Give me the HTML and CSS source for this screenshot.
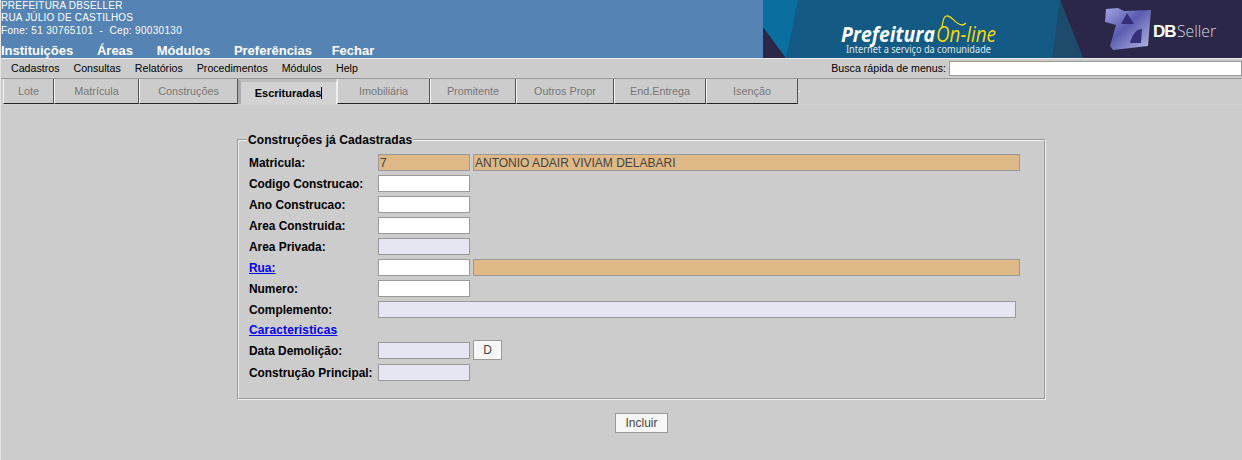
FILE: index.html
```html
<!DOCTYPE html>
<html lang="pt-BR">
<head>
  <meta charset="UTF-8">
  <title>Prefeitura On-line</title>
  <link rel="stylesheet" href="styles.css">
</head>
<body>

  <header class="topo">
    <div class="topo-esq">
      <div class="inst">PREFEITURA DBSELLER</div>
      <div class="inst">RUA JÚLIO DE CASTILHOS</div>
      <div class="inst fone">Fone: 51 30765101 &nbsp;-&nbsp; Cep: 90030130</div>
      <nav class="menu-topo">
        <a>Instituições</a>
        <a>Áreas</a>
        <a>Módulos</a>
        <a>Preferências</a>
        <a class="fechar">Fechar</a>
      </nav>
    </div>
    <svg class="banner" width="479" height="58" viewBox="0 0 479 58">
      <defs>
        <linearGradient id="cubo" x1="0" y1="0" x2="1" y2="1">
          <stop offset="0" stop-color="#a3a5e4"/>
          <stop offset="0.45" stop-color="#5b5cb0"/>
          <stop offset="1" stop-color="#b9bce4"/>
        </linearGradient>
      </defs>
      <rect width="479" height="58" fill="#2a2748"/>
      <polygon points="0,0 0,27 23,58 320,58 297,0" fill="#135a85"/>
      <polygon points="0,0 0,27 23,58 35,0" fill="#0a6f9f"/>
      <polygon points="297,0 320,58 289,58" fill="#1e4a6c"/>
      <text class="logo-pref" x="78" y="42" textLength="94" lengthAdjust="spacingAndGlyphs">Prefeitura</text>
      <text class="logo-online" x="173" y="42" textLength="60" lengthAdjust="spacingAndGlyphs">On-line</text>
      <path d="M179 27 C180 20 181 15 185 16 C190 17 192 24 199 25 C201 25 202 24 203 23" fill="none" stroke="#f2d90c" stroke-width="1.3"/>
      <text class="logo-sub" x="83" y="53" textLength="145" lengthAdjust="spacingAndGlyphs">Internet a serviço da comunidade</text>
      <path d="M343 9 L355 8 L361 11 L388 10 L385 46 L350 50 L347 46 L353 25 L342 22 Z" fill="url(#cubo)"/>
      <path d="M358 24 L364 13 L371 24 Z" fill="#34307a"/>
      <path d="M367 43 C369 35 373 29 379 29 L378 43 Z" fill="#34307a"/>
      <text class="logo-db" x="390" y="37">DB</text>
      <text class="logo-seller" x="414" y="37" textLength="39" lengthAdjust="spacingAndGlyphs">Seller</text>
    </svg>
  </header>

  <div class="barra-menu">
    <ul class="menu-sis">
      <li>Cadastros</li>
      <li>Consultas</li>
      <li>Relatórios</li>
      <li>Procedimentos</li>
      <li>Módulos</li>
      <li>Help</li>
    </ul>
    <div class="busca">
      <label for="busca">Busca rápida de menus:</label>
      <input type="text" id="busca">
    </div>
  </div>

  <div class="abas">
    <a class="aba w-lote">Lote</a>
    <a class="aba w-mat">Matrícula</a>
    <a class="aba w-cons">Construções</a>
    <a class="aba aba-ativa w-esc"><span class="cursor">Escrituradas</span></a>
    <a class="aba w-imo">Imobiliária</a>
    <a class="aba w-pro">Promitente</a>
    <a class="aba w-out">Outros Propr</a>
    <a class="aba w-end">End.Entrega</a>
    <a class="aba w-ise">Isenção</a>
  </div>

  <main class="conteudo">
    <fieldset class="grupo">
      <legend>Construções já Cadastradas</legend>

      <div class="linha">
        <label>Matricula:</label>
        <input class="campo leitura" type="text" value="7">
        <input class="campo leitura largo" type="text" value="ANTONIO ADAIR VIVIAM DELABARI">
      </div>
      <div class="linha">
        <label>Codigo Construcao:</label>
        <input class="campo" type="text">
      </div>
      <div class="linha">
        <label>Ano Construcao:</label>
        <input class="campo" type="text">
      </div>
      <div class="linha">
        <label>Area Construida:</label>
        <input class="campo" type="text">
      </div>
      <div class="linha">
        <label>Area Privada:</label>
        <input class="campo lilas" type="text">
      </div>
      <div class="linha">
        <label><a class="link" href="#">Rua:</a></label>
        <input class="campo" type="text">
        <input class="campo leitura largo" type="text">
      </div>
      <div class="linha">
        <label>Numero:</label>
        <input class="campo" type="text">
      </div>
      <div class="linha">
        <label>Complemento:</label>
        <input class="campo lilas compl" type="text">
      </div>
      <div class="linha linha-link">
        <a class="link link-carac" href="#">Caracteristicas</a>
      </div>
      <div class="linha">
        <label>Data Demolição:</label>
        <input class="campo lilas" type="text">
        <button class="btn btn-d" type="button">D</button>
      </div>
      <div class="linha linha-ult">
        <label>Construção Principal:</label>
        <input class="campo lilas" type="text">
      </div>
    </fieldset>

    <div class="acoes">
      <button class="btn btn-incluir" type="button">Incluir</button>
    </div>
  </main>

</body>
</html>
```

FILE: styles.css
```css
* {
  box-sizing: border-box;
}

html {
  background: #cccccc;
}

body {
  margin: 0;
  height: 460px;
  overflow: hidden;
  background: #cccccc;
  border-left: 1px solid #e4e4e4;
  font-family: "Liberation Sans", Arial, sans-serif;
  font-size: 11px;
  color: #000;
}

.topo {
  display: flex;
  justify-content: space-between;
  height: 58px;
  margin-left: -1px;
  background: #5583b3;
}

.topo-esq {
  padding-left: 1px;
  color: #fff;
}

.inst {
  height: 12px;
  font-size: 10px;
  line-height: 11px;
  letter-spacing: 0.2px;
  white-space: nowrap;
}

.fone {
  margin-top: 1px;
  height: 15px;
  line-height: 11px;
  letter-spacing: 0.33px;
}

.menu-topo {
  display: flex;
  gap: 23.7px;
  margin-top: 4px;
  font-size: 13px;
  font-weight: bold;
  line-height: 14px;
  white-space: nowrap;
}

.fechar {
  margin-left: -4px;
}

.banner {
  display: block;
  flex: none;
}

.logo-pref {
  font-family: "Open Sans", sans-serif;
  font-size: 21px;
  font-weight: bold;
  font-style: italic;
  fill: #fff;
}

.logo-online {
  font-family: "Open Sans", sans-serif;
  font-size: 22px;
  font-style: italic;
  fill: #f2d90c;
}

.logo-sub {
  font-family: "Noto Sans", sans-serif;
  font-size: 10px;
  fill: #dfe8ee;
}

.logo-db {
  font-family: "Liberation Sans", sans-serif;
  font-size: 17px;
  font-weight: bold;
  letter-spacing: -1px;
  fill: #fff;
}

.logo-seller {
  font-family: "Open Sans", sans-serif;
  font-size: 17px;
  font-weight: 300;
  fill: #d8d8e0;
}

.barra-menu {
  display: flex;
  justify-content: space-between;
  height: 21px;
  border-top: 1px solid #ececec;
  border-bottom: 1px solid #999;
  font-size: 10.65px;
}

.menu-sis {
  display: flex;
  gap: 14px;
  margin: 0;
  padding: 3px 0 0 10px;
  list-style: none;
  line-height: 13px;
  white-space: nowrap;
}

.busca {
  display: flex;
  align-items: center;
  gap: 3px;
  height: 18px;
}

.busca label {
  margin-top: -1px;
}

.busca input {
  width: 293px;
  height: 15px;
  padding: 0;
  background: #fff;
  border: 1px solid #999;
}

.abas {
  display: flex;
  height: 26px;
  padding-left: 2px;
  border-bottom: 1px solid #d2d2d2;
  font-size: 10.8px;
}

.abas::after {
  content: "";
  align-self: center;
  width: 1px;
  height: 1px;
  margin-left: 1px;
  background: #fff;
}

.aba {
  display: flex;
  align-items: center;
  justify-content: center;
  height: 25px;
  color: #777;
  border-left: 1px solid #f2f2f2;
  border-right: 1px solid #555;
  border-bottom: 1px solid #222;
}

.w-lote { width: 51px; }
.w-mat { width: 85px; }
.w-cons { width: 99px; }
.w-esc { width: 99px; }
.w-imo { width: 93px; }
.w-pro { width: 86px; }
.w-out { width: 98px; }
.w-end { width: 92px; }
.w-ise { width: 92px; }

.aba-ativa {
  color: #000;
  font-size: 11px;
  font-weight: bold;
  background: #d2d2d2;
  border-left: 3px solid #aaa;
  border-top: 3px solid #bdbdbd;
  border-right: 1px solid #eee;
  border-bottom: 0;
}

.cursor {
  border-right: 1px solid #000;
}

.conteudo {
  padding: 0 0 0 236px;
}

.grupo {
  width: 809px;
  height: 267px;
  margin: 28px 0 0;
  padding: 5px 0 0 10px;
  border: 2px groove #eee;
}

.grupo legend {
  margin-left: -2px;
  padding: 0 1px;
  font-size: 12px;
  font-weight: bold;
  letter-spacing: 0.08px;
  line-height: 14px;
}

.linha {
  display: flex;
  align-items: center;
  gap: 3px;
  height: 21px;
  font-size: 11.9px;
  font-weight: bold;
}

.linha label {
  width: 129px;
  margin-right: -3px;
  white-space: nowrap;
}

.linha-link {
  height: 20px;
}

.linha-ult {
  margin-top: 1px;
}

.link {
  color: #0000ee;
  text-decoration: underline;
}

.link-carac {
  letter-spacing: 0.2px;
}

.campo {
  width: 92px;
  height: 17px;
  padding: 0 1px;
  background: #fff;
  border: 1px solid #999;
  font-family: "Liberation Sans", Arial, sans-serif;
  font-size: 12px;
  color: #444;
}

.leitura {
  background: #deb887;
}

.lilas {
  background: #e6e6f2;
}

.largo {
  width: 547px;
}

.compl {
  width: 638px;
}

.btn {
  height: 20px;
  padding: 0;
  background: #f7f7f7;
  border: 1px solid #999;
  font-family: "Liberation Sans", Arial, sans-serif;
  font-size: 12px;
  color: #444;
}

.btn-d {
  align-self: flex-start;
  width: 29px;
}

.acoes {
  width: 809px;
  margin-top: 13px;
  text-align: center;
}

.btn-incluir {
  width: 53px;
}
```
